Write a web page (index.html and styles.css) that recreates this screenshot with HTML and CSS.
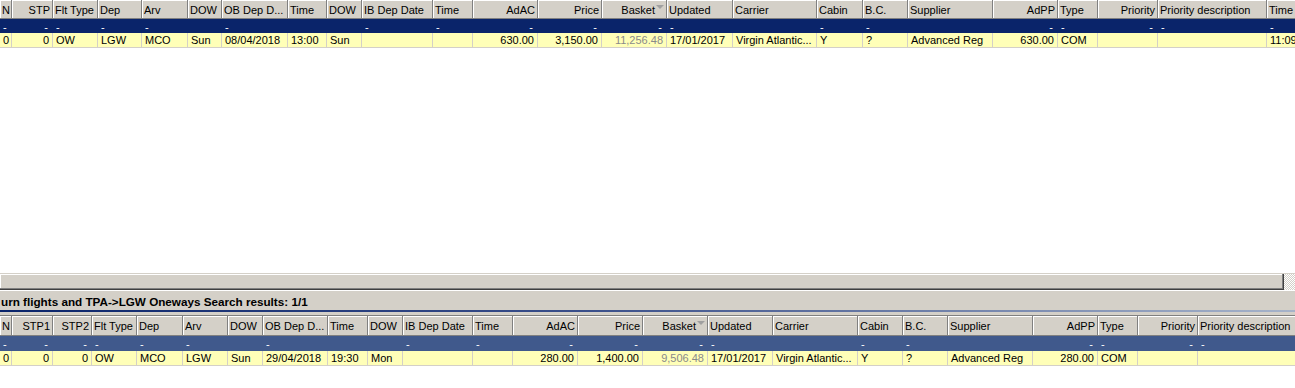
FILE: index.html
```html
<!DOCTYPE html>
<html>
<head>
<meta charset="utf-8">
<link rel="stylesheet" href="styles.css">
</head>
<body>
<div class="app">
  <section class="grid grid-top">
    <div class="row head">
      <div class="c">N</div><div class="c r">STP</div><div class="c">Flt Type</div><div class="c">Dep</div><div class="c">Arv</div><div class="c">DOW</div><div class="c">OB Dep D...</div><div class="c">Time</div><div class="c">DOW</div><div class="c">IB Dep Date</div><div class="c">Time</div><div class="c r">AdAC</div><div class="c r">Price</div><div class="c r">Basket<span class="sort"></span></div><div class="c">Updated</div><div class="c">Carrier</div><div class="c">Cabin</div><div class="c">B.C.</div><div class="c">Supplier</div><div class="c r">AdPP</div><div class="c">Type</div><div class="c r">Priority</div><div class="c">Priority description</div><div class="c">Time</div>
    </div>
    <div class="row filter">
      <div class="c">-</div><div class="c r">-</div><div class="c">-</div><div class="c">-</div><div class="c">-</div><div class="c"></div><div class="c">-</div><div class="c"></div><div class="c"></div><div class="c">-</div><div class="c">-</div><div class="c r">-</div><div class="c r">-</div><div class="c r">-</div><div class="c">-</div><div class="c"></div><div class="c">-</div><div class="c">-</div><div class="c"></div><div class="c r">-</div><div class="c">-</div><div class="c r">-</div><div class="c">-</div><div class="c">-</div>
    </div>
    <div class="row data">
      <div class="c">0</div><div class="c r">0</div><div class="c">OW</div><div class="c">LGW</div><div class="c">MCO</div><div class="c">Sun</div><div class="c">08/04/2018</div><div class="c">13:00</div><div class="c">Sun</div><div class="c"></div><div class="c"></div><div class="c r">630.00</div><div class="c r">3,150.00</div><div class="c r muted">11,256.48</div><div class="c">17/01/2017</div><div class="c">Virgin Atlantic...</div><div class="c">Y</div><div class="c">?</div><div class="c">Advanced Reg</div><div class="c r">630.00</div><div class="c">COM</div><div class="c"></div><div class="c"></div><div class="c">11:09</div>
    </div>
  </section>

  <div class="hscroll">
    <div class="thumb"></div>
    <div class="corner"></div>
  </div>

  <div class="caption">
    <span class="caption-text">urn flights and TPA-&gt;LGW Oneways Search results: 1/1</span>
  </div>
  <div class="caption-line"></div>
  <div class="caption-gap"></div>

  <section class="grid grid-bottom">
    <div class="row head">
      <div class="c">N</div><div class="c r">STP1</div><div class="c r">STP2</div><div class="c">Flt Type</div><div class="c">Dep</div><div class="c">Arv</div><div class="c">DOW</div><div class="c">OB Dep D...</div><div class="c">Time</div><div class="c">DOW</div><div class="c">IB Dep Date</div><div class="c">Time</div><div class="c r">AdAC</div><div class="c r">Price</div><div class="c r">Basket<span class="sort"></span></div><div class="c">Updated</div><div class="c">Carrier</div><div class="c">Cabin</div><div class="c">B.C.</div><div class="c">Supplier</div><div class="c r">AdPP</div><div class="c">Type</div><div class="c r">Priority</div><div class="c">Priority description</div>
    </div>
    <div class="row filter">
      <div class="c">-</div><div class="c r">-</div><div class="c r">-</div><div class="c">-</div><div class="c">-</div><div class="c">-</div><div class="c"></div><div class="c">-</div><div class="c"></div><div class="c"></div><div class="c">-</div><div class="c">-</div><div class="c r">-</div><div class="c r">-</div><div class="c r">-</div><div class="c">-</div><div class="c"></div><div class="c">-</div><div class="c">-</div><div class="c"></div><div class="c r">-</div><div class="c">-</div><div class="c r">-</div><div class="c">-</div>
    </div>
    <div class="row data">
      <div class="c">0</div><div class="c r">0</div><div class="c r">0</div><div class="c">OW</div><div class="c">MCO</div><div class="c">LGW</div><div class="c">Sun</div><div class="c">29/04/2018</div><div class="c">19:30</div><div class="c">Mon</div><div class="c"></div><div class="c"></div><div class="c r">280.00</div><div class="c r">1,400.00</div><div class="c r muted">9,506.48</div><div class="c">17/01/2017</div><div class="c">Virgin Atlantic...</div><div class="c">Y</div><div class="c">?</div><div class="c">Advanced Reg</div><div class="c r">280.00</div><div class="c">COM</div><div class="c"></div><div class="c"></div>
    </div>
  </section>
</div>
</body>
</html>
```
FILE: styles.css
```css
html, body {
  margin: 0;
  padding: 0;
  background: #ffffff;
}
body {
  width: 1295px;
  height: 388px;
  overflow: hidden;
  font-family: "Liberation Sans", Arial, sans-serif;
  font-size: 11px;
  color: #000;
}
.app {
  display: flex;
  flex-direction: column;
  width: 1295px;
  overflow: hidden;
}
.grid {
  display: flex;
  flex-direction: column;
  overflow: hidden;
  width: 1295px;
}
.grid-top {
  --cols: 12px 41px 45px 44px 46px 34px 66px 39px 35px 71px 40px 65px 64px 65px 66px 84px 46px 45px 85px 65px 40px 60px 109px 60px;
  height: 273px;
  background: #ffffff;
}
.grid-bottom {
  --cols: 12px 41px 39px 45px 46px 45px 35px 65px 40px 35px 70px 40px 65px 65px 65px 65px 85px 45px 45px 85px 65px 40px 60px 110px;
  border-top: 1px solid #808080;
  flex: 1;
}
.row {
  display: grid;
  grid-template-columns: var(--cols);
  width: max-content;
}
.c {
  overflow: hidden;
  white-space: nowrap;
  padding: 0 2px 0 3px;
  box-sizing: border-box;
}
.r {
  text-align: right;
  padding: 0 3px 0 2px;
}

/* header */
.head .c {
  height: 19px;
  line-height: 20px;
  background: #d4d0c8;
  border-right: 1px solid #808080;
  border-bottom: 1px solid #808080;
  box-shadow: inset 1px 1px 0 #ffffff;
  padding-left: 2px;
}
.head .c.r {
  padding-right: 2px;
}
.grid-bottom .head .c {
  height: 20px;
  line-height: 20px;
}
.sort {
  display: inline-block;
  width: 0;
  height: 0;
  margin-left: 1px;
  border-left: 4px solid transparent;
  border-right: 4px solid transparent;
  border-top: 4px solid #a0a0a0;
  vertical-align: 5px;
}

/* filter row */
.filter .c {
  height: 14px;
  line-height: 16px;
  color: #ffffff;
  background: #0a246a;
}
.grid-bottom .filter .c {
  height: 15px;
  line-height: 16px;
  background: #40598c;
}
.filter .c.r {
  padding-right: 5px;
}

/* data row */
.data .c {
  height: 15px;
  line-height: 15px;
  background: #ffffb8;
  border-right: 1px solid #d4d0c8;
  border-bottom: 1px solid #d4d0c8;
}
.data .muted {
  color: #8a8a8a;
}

/* horizontal scroll bar */
.hscroll {
  display: flex;
  height: 16px;
  border-top: 1px solid #d4d0c8;
  background: #ffffff;
}
.thumb {
  flex: 1;
  background: #d4d0c8;
  border-right: 1px solid #404040;
  border-bottom: 1px solid #404040;
  box-shadow: inset -1px -1px 0 #808080, inset 1px 1px 0 #ffffff;
}
.corner {
  width: 11px;
  background-color: #ffffff;
  background-image:
    linear-gradient(45deg, #d4d0c8 25%, transparent 25%, transparent 75%, #d4d0c8 75%),
    linear-gradient(45deg, #d4d0c8 25%, transparent 25%, transparent 75%, #d4d0c8 75%);
  background-size: 2px 2px;
  background-position: 0 0, 1px 1px;
}

/* caption */
.caption {
  height: 19px;
  background: #d4d0c8;
  border-top: 1px solid #ffffff;
  overflow: hidden;
  display: flex;
  align-items: center;
}
.caption-text {
  font-weight: bold;
  font-size: 11.7px;
  white-space: nowrap;
  padding-left: 1px;
  padding-top: 1px;
}
.caption-line {
  height: 2px;
  background: linear-gradient(to right, #0a246a 0%, #3a4f8a 45%, #a6b3c9 100%);
}
.caption-gap {
  height: 3px;
  background: #d4d0c8;
}
```
